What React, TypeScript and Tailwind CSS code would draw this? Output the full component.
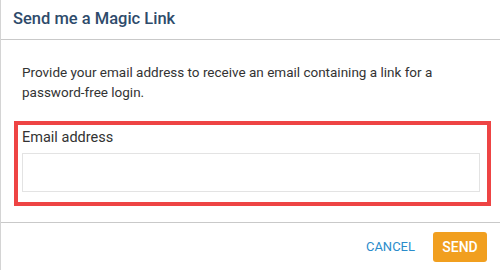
import React from 'react'

export default function App() {
  return (
    <div
      className="w-[500px] h-[270px] overflow-hidden bg-white border-l border-[#d4d4d4] text-[#333]"
      style={{ fontFamily: 'Roboto, "Liberation Sans", sans-serif' }}
    >
      <div className="h-[40px] px-3 flex items-center border-b border-[#c9c9c9]">
        <span className="text-[16.5px] font-medium text-[#2e4b6b]">Send me a Magic Link</span>
      </div>

      <div className="pt-[22px] pb-4 pl-[21px] pr-[20px]">
        <p className="text-[13.5px] leading-[20px] text-[#333]">
          Provide your email address to receive an email containing a link for a password-free login.
        </p>

        <div className="mt-[19px] -ml-[8px] -mr-[11px] border-4 border-[#ee4444] pl-1 pr-[7px] pt-[3px] pb-[10px]">
          <label className="block text-[14.5px] leading-[20px] text-[#333]">Email address</label>
          <input
            type="email"
            className="mt-[5px] block w-full h-[39px] border border-[#e3e3e3] bg-white outline-none px-2 text-[15px]"
          />
        </div>
      </div>

      <div className="border-t border-[#c9c9c9] flex items-center justify-end gap-[18px] pt-[9px] pr-[13px]">
        <button className="text-[13px] text-[#2b8ccb] uppercase">Cancel</button>
        <button className="h-[30px] w-[54px] rounded-[3px] bg-[#f19f1f] text-white text-[14px] font-medium uppercase">
          Send
        </button>
      </div>
    </div>
  )
}
